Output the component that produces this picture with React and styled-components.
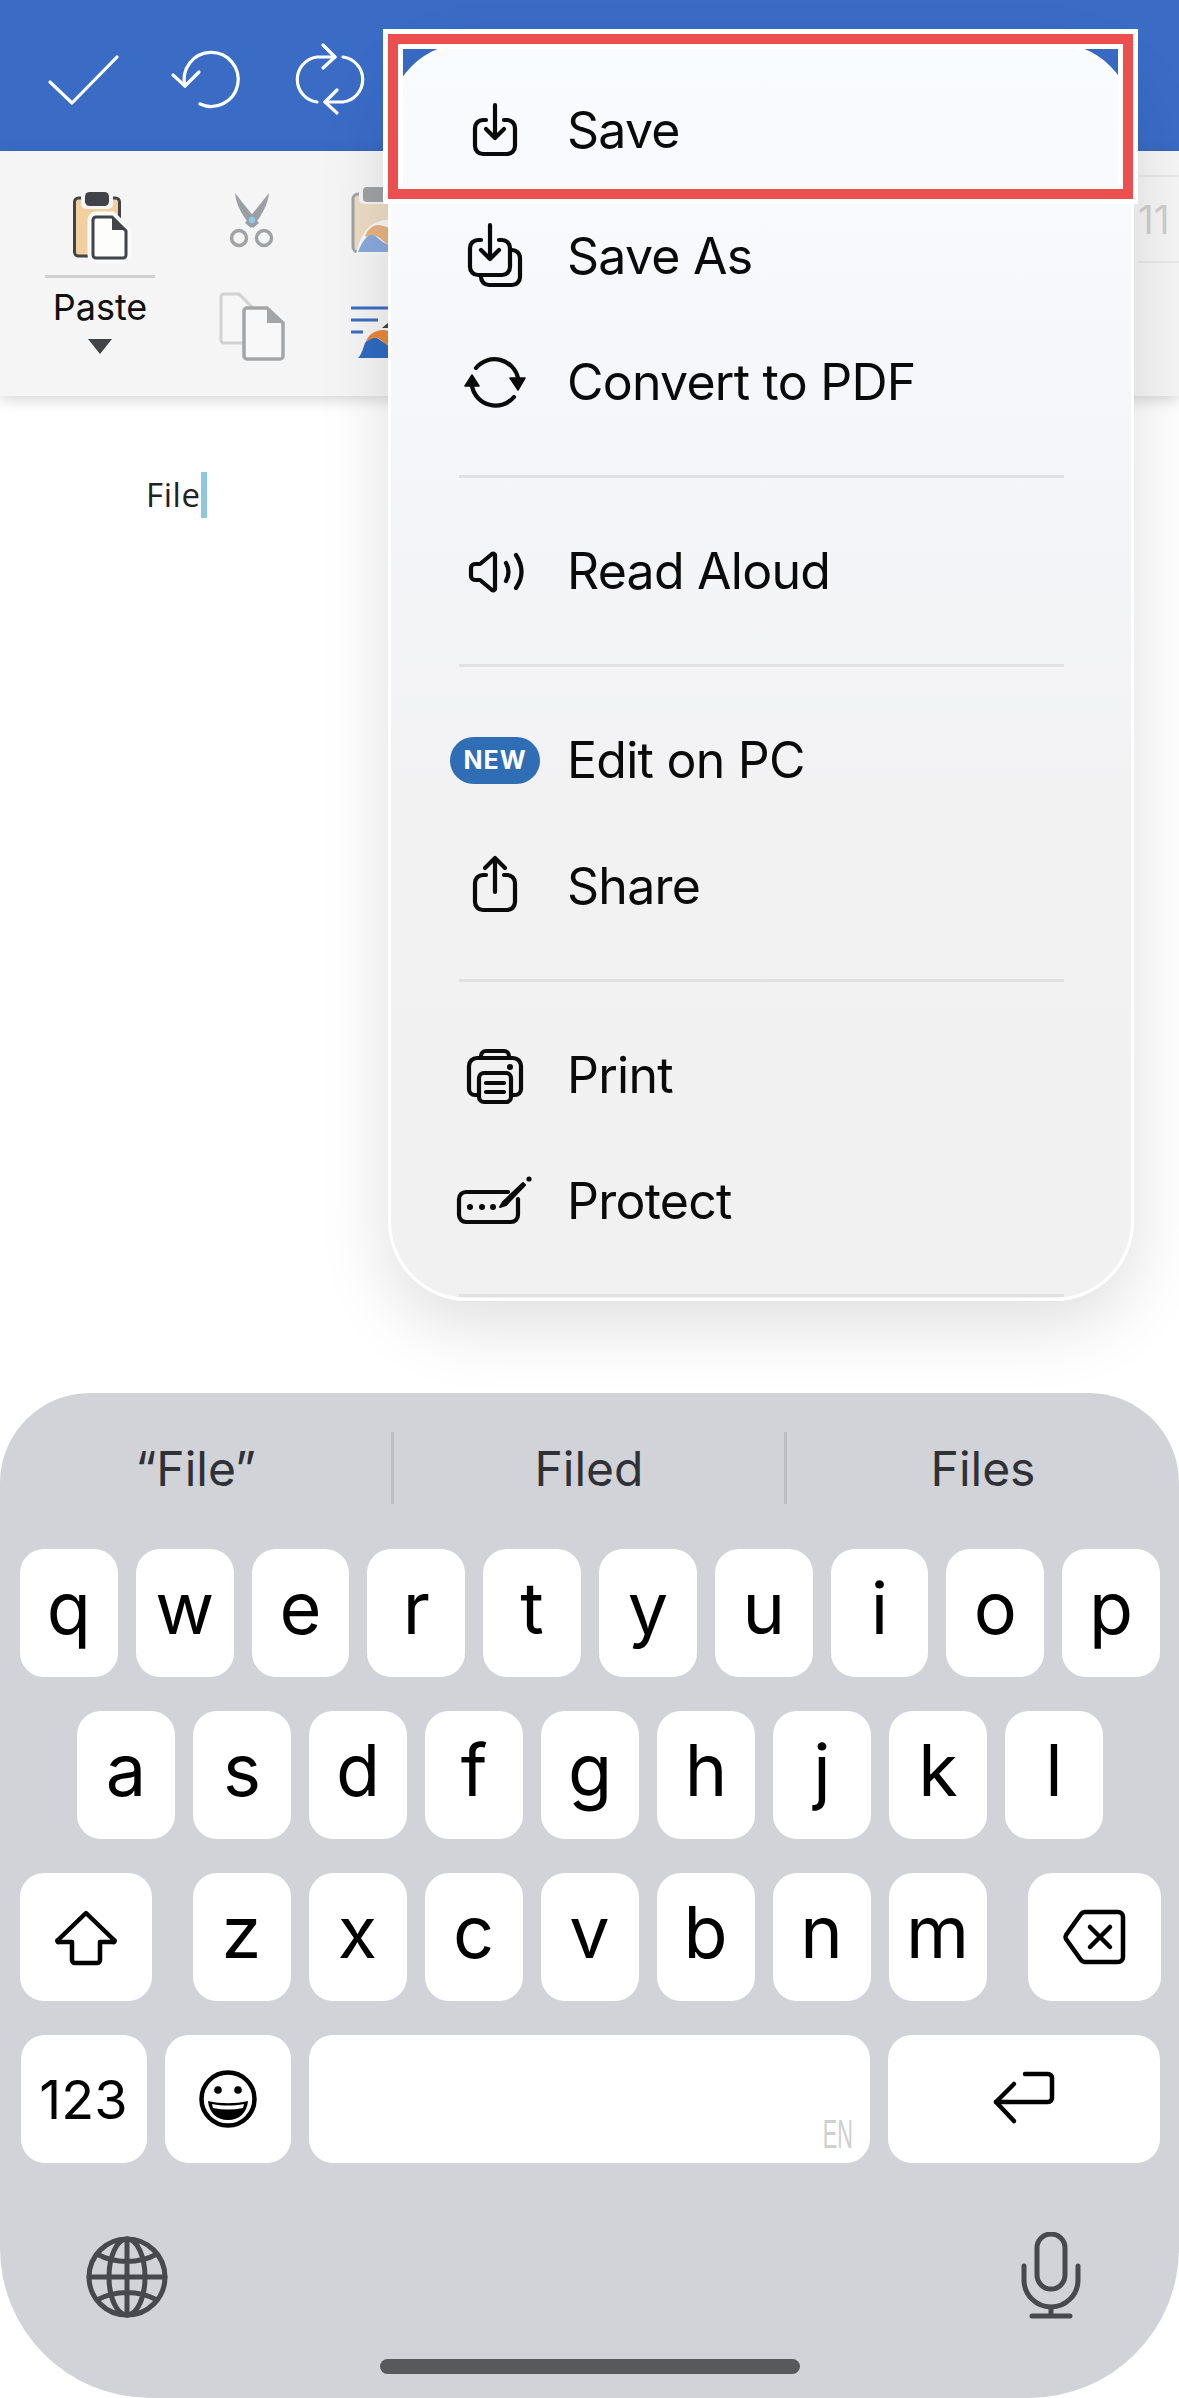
import React from 'react'
import styled, { createGlobalStyle } from 'styled-components'

const GlobalStyle = createGlobalStyle`
  html, body { margin: 0; padding: 0; background: #fff; }
  body { font-family: Inter, "Noto Sans", sans-serif; color: #0a0a0a; }
`

const Screen = styled.div`
  position: relative;
  width: 1179px;
  height: 2398px;
  overflow: hidden;
  background: #fff;
  display: flex;
  flex-direction: column;
`

const Header = styled.header`
  height: 151px;
  flex: none;
  box-sizing: border-box;
  background: #3a6cc6;
  padding: 39px 0 0 44px;
  display: flex;
  gap: 43px;
`

const HeaderIcon = styled.svg`
  width: 80px;
  height: 80px;
  fill: none;
  stroke: #fff;
  stroke-width: 3.2;
  stroke-linecap: round;
  stroke-linejoin: round;
`

const Ribbon = styled.section`
  position: relative;
  height: 245px;
  flex: none;
  box-sizing: border-box;
  background: #f5f5f6;
  box-shadow: 0 4px 14px rgba(0, 0, 0, 0.16);
  padding: 29px 0 0 45px;
  display: flex;
`

const PasteGroup = styled.div`
  width: 110px;
  display: flex;
  flex-direction: column;
  align-items: center;
`

const PasteRule = styled.div`
  width: 110px;
  height: 3px;
  margin-top: 10px;
  background: #d0d0d0;
`

const PasteLabel = styled.div`
  font-size: 36px;
  line-height: 40px;
  margin-top: 9px;
  color: #111;
`

const PasteCaret = styled.div`
  width: 0;
  height: 0;
  margin-top: 12px;
  border-left: 12px solid transparent;
  border-right: 12px solid transparent;
  border-top: 15px solid #404449;
`

const ToolColumn = styled.div`
  width: 66px;
  margin-left: ${(p) => p.$gap}px;
  display: flex;
  flex-direction: column;
  gap: 20px;
`

const ToolIcon = styled.svg`
  display: block;
  width: 66px;
  height: 85px;
  overflow: visible;
`

const SizeField = styled.div`
  margin-left: auto;
  align-self: flex-start;
  margin-top: -5px;
  width: 41px;
  height: 84px;
  border-top: 2px solid #e8e8e8;
  border-bottom: 2px solid #e8e8e8;
  font-size: 39px;
  line-height: 86px;
  color: #cfcfcf;
  overflow: hidden;
  white-space: nowrap;
`

const Page = styled.main`
  flex: 1;
  padding: 76px 0 0 146px;
  display: flex;
  align-items: flex-start;
`

const DocText = styled.span`
  font-family: "Open Sans", sans-serif;
  font-size: 33px;
  letter-spacing: 0.6px;
  line-height: 46px;
  color: #222;
`

const Caret = styled.span`
  width: 6px;
  height: 46px;
  background: #8fc8de;
`

const Keyboard = styled.section`
  flex: none;
  height: 1005px;
  box-sizing: border-box;
  background: #d1d3d9;
  border-radius: 90px 90px 150px 150px;
  padding-top: 39px;
`

const Suggestions = styled.div`
  height: 72px;
  display: grid;
  grid-template-columns: 391px 393px 1fr;
`

const Suggestion = styled.div`
  display: flex;
  align-items: center;
  justify-content: center;
  font-size: 48px;
  color: #2f3136;
  & + & {
    border-left: 3px solid #bdbfc5;
  }
`

const Keys = styled.div`
  margin-top: 45px;
  padding: 0 19px 0 20px;
  display: flex;
  flex-direction: column;
  gap: 34px;
`

const KeyRow = styled.div`
  display: flex;
  justify-content: center;
  gap: 18px;
`

const Key = styled.div`
  position: relative;
  box-sizing: border-box;
  flex: ${(p) => (p.$w ? `0 0 ${p.$w}px` : '1 1 0')};
  margin-left: ${(p) => p.$ml || 0}px;
  margin-right: ${(p) => p.$mr || 0}px;
  height: 128px;
  background: #fff;
  border-radius: 24px;
  display: flex;
  align-items: center;
  justify-content: center;
  padding-bottom: ${(p) => p.$pb ?? 12}px;
  font-size: ${(p) => p.$size || 72}px;
  color: #000;
`

const SpaceTag = styled.span`
  position: absolute;
  right: 17px;
  bottom: 12px;
  font-family: "Liberation Sans", sans-serif;
  font-size: 41px;
  line-height: 34px;
  color: #cfcfcf;
  transform: scaleX(0.53);
  transform-origin: right bottom;
`

const KeyIcon = styled.svg`
  width: 80px;
  height: 80px;
  fill: none;
  stroke: #000;
  stroke-width: 4.5;
  stroke-linecap: round;
  stroke-linejoin: round;
`

const BottomRow = styled.div`
  margin-top: 69px;
  padding: 0 83px 0 82px;
  display: flex;
  justify-content: space-between;
`

const SystemIcon = styled.svg`
  width: 90px;
  height: 90px;
  fill: none;
  stroke: #47494e;
  stroke-width: 5;
  stroke-linecap: round;
`

const HomeBar = styled.div`
  width: 420px;
  height: 15px;
  margin: 37px auto 0;
  border-radius: 8px;
  background: #58595c;
`

const Menu = styled.nav`
  position: absolute;
  top: 43px;
  left: 388px;
  width: 746px;
  height: 1258px;
  box-sizing: border-box;
  overflow: hidden;
  border: 3px solid #fff;
  border-radius: 80px;
  padding-top: 21px;
  background: linear-gradient(180deg, #f9fcfe 0%, #f5f6fa 30%, #f2f2f3 60%, #f1f1f1 100%);
  box-shadow: 0 24px 70px rgba(0, 0, 0, 0.13);
`

const MenuRow = styled.div`
  height: 126px;
  padding-left: 50px;
  display: flex;
  align-items: center;
  font-size: 50px;
  letter-spacing: -0.75px;
  color: #0a0a0a;
`

const IconSlot = styled.div`
  width: 108px;
  margin-right: 18px;
  display: flex;
  justify-content: center;
`

const MenuIcon = styled.svg`
  display: block;
  width: 80px;
  height: 80px;
  overflow: visible;
  fill: none;
  stroke: #0a0a0a;
  stroke-width: 4.2;
  stroke-linecap: round;
  stroke-linejoin: round;
`

const NewBadge = styled.span`
  width: 90px;
  height: 47px;
  border-radius: 24px;
  background: #2f6db5;
  color: #fff;
  font-size: 25px;
  font-weight: 700;
  letter-spacing: 1px;
  display: flex;
  align-items: center;
  justify-content: center;
`

const Divider = styled.div`
  height: 3px;
  margin: 30px 67px 30px 68px;
  background: #e1e1e2;
`

const Highlight = styled.div`
  position: absolute;
  top: 29px;
  left: 383px;
  width: 755px;
  height: 175px;
  box-sizing: border-box;
  border: 5px solid #fff;
  &::before {
    content: '';
    position: absolute;
    inset: 0;
    border: 10px solid #ec4f4f;
    box-sizing: border-box;
  }
  &::after {
    content: '';
    position: absolute;
    inset: 10px;
    border: 5px solid #fff;
    box-sizing: border-box;
  }
`

const Check = () => (
  <HeaderIcon viewBox="44 39 80 80"><path d="M50 82l22 21 45-46" /></HeaderIcon>
)

const Undo = () => (
  <HeaderIcon viewBox="167 39 80 80">
    <path d="M185 86A27 27 0 1 1 200 104" />
    <path d="M173 75l12 11 14-14" />
  </HeaderIcon>
)

const Redo = () => (
  <HeaderIcon viewBox="290 39 80 80">
    <path d="M317 102A22.7 22.7 0 0 1 317 57H335" />
    <path d="M323 45l12 12-12 11" />
    <path d="M343 57A22.7 22.7 0 0 1 343 102H325" />
    <path d="M337 90l-12 12 12 11" />
  </HeaderIcon>
)

const PasteIcon = () => (
  <ToolIcon viewBox="60 180 80 85" style={{ width: 80 }}>
    <rect x="74.5" y="198" width="45" height="58" rx="4" fill="#f3cf9f" stroke="#404449" strokeWidth="3" />
    <rect x="81" y="189" width="32" height="20" rx="5" fill="#f5f5f6" />
    <rect x="85" y="192" width="24" height="14" rx="4.5" fill="#404449" />
    <path d="M96 216h16l15 14v25a4 4 0 0 1-4 4H96a4 4 0 0 1-4-4v-35a4 4 0 0 1 4-4z" fill="#fff" stroke="#f9f9f9" strokeWidth="9" />
    <path d="M96 217h16l14 14v24a3 3 0 0 1-3 3H96a3 3 0 0 1-3-3v-35a3 3 0 0 1 3-3z" fill="#fdfdfb" stroke="#404449" strokeWidth="3" />
    <path d="M112 216l15 14h-15z" fill="#404449" />
  </ToolIcon>
)

const CutIcon = () => (
  <ToolIcon viewBox="219 180 66 85">
    <path d="M235 193c1 13 10 27 18 35l6-5c-8-10-17-21-24-30z" fill="#9b9ea2" />
    <path d="M269 193c-1 13-10 27-18 35l-6-5c8-10 17-21 24-30z" fill="#9b9ea2" />
    <circle cx="252" cy="220" r="3.2" fill="#8fcbea" />
    <circle cx="239" cy="238" r="7.5" fill="none" stroke="#a0a2a4" strokeWidth="3.5" />
    <circle cx="264" cy="238" r="7.5" fill="none" stroke="#a0a2a4" strokeWidth="3.5" />
  </ToolIcon>
)

const CopyIcon = () => (
  <ToolIcon viewBox="219 285 66 85">
    <path d="M224 294h15l13 13v36h-28a3 3 0 0 1-3-3v-43a3 3 0 0 1 3-3z" fill="#f7f7f7" stroke="#d2d2d2" strokeWidth="3" />
    <path d="M247 308h20l16 15v33a3 3 0 0 1-3 3h-33a3 3 0 0 1-3-3v-45a3 3 0 0 1 3-3z" fill="#f8f8f8" stroke="#a3a6a9" strokeWidth="3.5" />
    <path d="M267 308l16 15h-16z" fill="#a3a6a9" />
  </ToolIcon>
)

const PainterIcon = () => (
  <ToolIcon viewBox="350 180 66 85">
    <rect x="353" y="194" width="50" height="58" rx="5" fill="#eddcc4" stroke="#a0a2a4" strokeWidth="3" />
    <rect x="359" y="184" width="34" height="20" rx="5" fill="#f5f5f6" />
    <rect x="363" y="187" width="26" height="15" rx="4" fill="#a0a2a4" />
    <path d="M356 254c3-12 7-24 17-30 6-3 12-5 17-4v34z" fill="#f8f8f8" />
    <path d="M365 236c3-7 8-11 13-11 4 0 8 2 12 3v17c-6-1-9-8-14-9-4-1-8 2-11 0z" fill="#e8b47f" />
    <path d="M358 252c3-7 6-15 13-17 6-1 9 8 19 10v7z" fill="#8aa9dc" />
  </ToolIcon>
)

const StylesIcon = () => (
  <ToolIcon viewBox="350 285 66 85">
    <path d="M351 308h50M351 320h27M351 332h12" stroke="#3a6cc6" strokeWidth="3" />
    <path d="M382 328l7-6v6z" fill="#404449" />
    <path d="M358 358c4-4 5-10 7-15 3-5 8-7 12-5 4 2 7 6 15 8v12z" fill="#2f6bc0" />
    <path d="M366 342c2-8 10-12 17-12 3 0 6 1 9 2v14c-6 1-10-7-15-8-4-1-8 2-11 4z" fill="#e8883a" />
  </ToolIcon>
)

const SaveGlyph = () => (
  <MenuIcon viewBox="0 0 80 80">
    <path d="M31 30h-3a8 8 0 0 0-8 8v18a8 8 0 0 0 8 8h24a8 8 0 0 0 8-8V38a8 8 0 0 0-8-8h-3" />
    <path d="M40 15v33M31 39l9 9 9-9" />
  </MenuIcon>
)

const SaveAsGlyph = () => (
  <MenuIcon viewBox="0 0 80 80">
    <path d="M26 24h-3a8 8 0 0 0-8 8v19a8 8 0 0 0 8 8h24a8 8 0 0 0 8-8V32a8 8 0 0 0-8-8h-3" />
    <path d="M35 9v34M26 34l9 9 9-9" />
    <path d="M57 34a8 8 0 0 1 8 8v19a8 8 0 0 1-8 8H34a8 8 0 0 1-8-8" />
  </MenuIcon>
)

const ConvertGlyph = () => (
  <MenuIcon viewBox="0 0 80 80">
    <path d="M21 26A24 24 0 0 1 63 36" />
    <path d="M17 44A24 24 0 0 0 59 55" />
    <path d="M10 44h14l-7-11zM55 36h15l-7 12z" fill="#0a0a0a" strokeWidth="1.5" />
  </MenuIcon>
)

const SpeakerGlyph = () => (
  <MenuIcon viewBox="0 0 80 80">
    <path d="M40 24v34a2 2 0 0 1-3 1L25 49h-5a4 4 0 0 1-4-4v-8a4 4 0 0 1 4-4h5l12-10a2 2 0 0 1 3 1z" />
    <path d="M51 32q5 9 0 18M61 24q11 17 0 33" />
  </MenuIcon>
)

const ShareGlyph = () => (
  <MenuIcon viewBox="0 0 80 80">
    <path d="M31 29h-3a8 8 0 0 0-8 8v19a8 8 0 0 0 8 8h24a8 8 0 0 0 8-8V37a8 8 0 0 0-8-8h-3" />
    <path d="M40 12v34M30 22l10-10 10 10" />
  </MenuIcon>
)

const PrintGlyph = () => (
  <MenuIcon viewBox="0 0 80 80">
    <path d="M24 60h-4a6 6 0 0 1-6-6V31a8 8 0 0 1 8-8h36a8 8 0 0 1 8 8v23a6 6 0 0 1-6 6h-4" />
    <path d="M26 23v-2a5 5 0 0 1 5-5h18a5 5 0 0 1 5 5v2" />
    <rect x="24" y="38" width="32" height="29" rx="5" />
    <path d="M31 48h18M31 57h18" />
    <circle cx="55" cy="32" r="3" fill="#0a0a0a" stroke="none" />
  </MenuIcon>
)

const ProtectGlyph = () => (
  <MenuIcon viewBox="0 0 80 80">
    <path d="M53 31H11a7 7 0 0 0-7 7v16a7 7 0 0 0 7 7h45a7 7 0 0 0 7-7V38" />
    <circle cx="15" cy="46" r="3" fill="#0a0a0a" stroke="none" />
    <circle cx="27" cy="46" r="3" fill="#0a0a0a" stroke="none" />
    <circle cx="38" cy="46" r="3" fill="#0a0a0a" stroke="none" />
    <path d="M45 46l3-5 20-19 2 2-19 20z" fill="#0a0a0a" strokeWidth="2" />
    <circle cx="74" cy="18" r="2.6" fill="#0a0a0a" stroke="none" />
  </MenuIcon>
)

const ShiftGlyph = () => (
  <KeyIcon viewBox="0 0 80 80">
    <path d="M40 16L12 43a1 1 0 0 0 1 2h13v18a3 3 0 0 0 3 3h22a3 3 0 0 0 3-3V45h13a1 1 0 0 0 1-2z" />
  </KeyIcon>
)

const DeleteGlyph = () => (
  <KeyIcon viewBox="0 0 80 80">
    <path d="M31 15h33a5 5 0 0 1 5 5v40a5 5 0 0 1-5 5H31a6 6 0 0 1-4-2L12 42a4 4 0 0 1 0-4l15-21a6 6 0 0 1 4-2z" />
    <path d="M36 30l20 20M56 30L36 50" />
  </KeyIcon>
)

const EmojiGlyph = () => (
  <KeyIcon viewBox="0 0 80 80">
    <circle cx="40" cy="40" r="26.5" />
    <circle cx="30" cy="31" r="3.8" fill="#000" stroke="none" />
    <circle cx="50" cy="31" r="3.8" fill="#000" stroke="none" />
    <path d="M20 42c13 3 27 3 40 0-1 12-9 19-20 19s-19-7-20-19z" fill="#000" stroke="none" />
    <path d="M24 45c11 2 21 2 32 0l-1 4c-10 2-20 2-30 0z" fill="#fff" stroke="none" />
  </KeyIcon>
)

const ReturnGlyph = () => (
  <KeyIcon viewBox="0 0 80 80">
    <path d="M41 15h23a4 4 0 0 1 4 4v20a4 4 0 0 1-4 4H12" />
    <path d="M30 25L12 43l18 19" />
  </KeyIcon>
)

const GlobeIcon = () => (
  <SystemIcon viewBox="0 0 90 90">
    <circle cx="45" cy="45" r="38" />
    <ellipse cx="45" cy="45" rx="18" ry="38" />
    <path d="M45 7v76M7 45h76M15 22c18 10 42 10 60 0M15 68c18-10 42-10 60 0" />
  </SystemIcon>
)

const MicIcon = () => (
  <SystemIcon viewBox="0 0 90 90">
    <rect x="31" y="2" width="28" height="55" rx="14" />
    <path d="M18 34v14a27 27 0 0 0 54 0V34M45 75v9M26 84h38" />
  </SystemIcon>
)

const row1 = ['q', 'w', 'e', 'r', 't', 'y', 'u', 'i', 'o', 'p']
const row2 = ['a', 's', 'd', 'f', 'g', 'h', 'j', 'k', 'l']
const row3 = ['z', 'x', 'c', 'v', 'b', 'n', 'm']

function App() {
  return (
    <Screen>
      <GlobalStyle />
      <Header>
        <Check />
        <Undo />
        <Redo />
      </Header>
      <Ribbon>
        <PasteGroup>
          <PasteIcon />
          <PasteRule />
          <PasteLabel>Paste</PasteLabel>
          <PasteCaret />
        </PasteGroup>
        <ToolColumn $gap={64}>
          <CutIcon />
          <CopyIcon />
        </ToolColumn>
        <ToolColumn $gap={65}>
          <PainterIcon />
          <StylesIcon />
        </ToolColumn>
        <SizeField>11</SizeField>
      </Ribbon>
      <Page>
        <DocText>File</DocText>
        <Caret />
      </Page>
      <Keyboard>
        <Suggestions>
          <Suggestion>“File”</Suggestion>
          <Suggestion>Filed</Suggestion>
          <Suggestion>Files</Suggestion>
        </Suggestions>
        <Keys>
          <KeyRow>
            {row1.map((k) => <Key key={k}>{k}</Key>)}
          </KeyRow>
          <KeyRow>
            {row2.map((k) => <Key key={k} $w={98}>{k}</Key>)}
          </KeyRow>
          <KeyRow>
            <Key $w={132} $mr={23} $pb={0}><ShiftGlyph /></Key>
            {row3.map((k) => <Key key={k} $w={98}>{k}</Key>)}
            <Key $w={133} $ml={23} $pb={0}><DeleteGlyph /></Key>
          </KeyRow>
          <KeyRow>
            <Key $w={126} $size={54} $pb={0}>123</Key>
            <Key $w={126} $pb={0}><EmojiGlyph /></Key>
            <Key $w={561}><SpaceTag>EN</SpaceTag></Key>
            <Key $w={272} $pb={0}><ReturnGlyph /></Key>
          </KeyRow>
        </Keys>
        <BottomRow>
          <GlobeIcon />
          <MicIcon />
        </BottomRow>
        <HomeBar />
      </Keyboard>
      <Menu>
        <MenuRow><IconSlot><SaveGlyph /></IconSlot>Save</MenuRow>
        <MenuRow><IconSlot><SaveAsGlyph /></IconSlot>Save As</MenuRow>
        <MenuRow><IconSlot><ConvertGlyph /></IconSlot>Convert to PDF</MenuRow>
        <Divider />
        <MenuRow><IconSlot><SpeakerGlyph /></IconSlot>Read Aloud</MenuRow>
        <Divider />
        <MenuRow><IconSlot><NewBadge>NEW</NewBadge></IconSlot>Edit on PC</MenuRow>
        <MenuRow><IconSlot><ShareGlyph /></IconSlot>Share</MenuRow>
        <Divider />
        <MenuRow><IconSlot><PrintGlyph /></IconSlot>Print</MenuRow>
        <MenuRow><IconSlot><ProtectGlyph /></IconSlot>Protect</MenuRow>
        <Divider />
      </Menu>
      <Highlight />
    </Screen>
  )
}

export default App
